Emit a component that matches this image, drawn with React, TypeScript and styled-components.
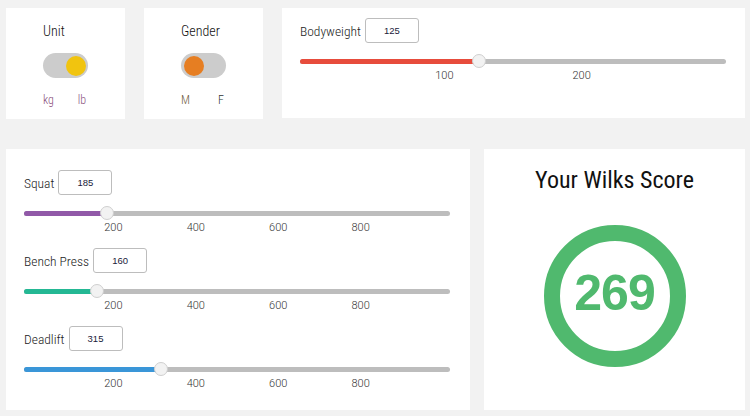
import { FC } from "react";
import styled, { createGlobalStyle } from "styled-components";

const GlobalStyle = createGlobalStyle`
  html, body {
    margin: 0;
    padding: 0;
    background: #f2f2f2;
    font-family: "Roboto Condensed", Roboto, "Liberation Sans", sans-serif;
    font-weight: 300;
    color: #222;
  }
`;

const Page = styled.div`
  width: 750px;
  height: 416px;
  box-sizing: border-box;
  padding: 8px 5px 0 6px;
  display: flex;
  flex-direction: column;
  gap: 30px;
`;

const Row = styled.div`
  display: flex;
`;

const Card = styled.div<{ w: number; h: number; gap?: number }>`
  background: #fff;
  width: ${(p) => p.w}px;
  height: ${(p) => p.h}px;
  margin-right: ${(p) => p.gap ?? 0}px;
  box-sizing: border-box;
  flex-shrink: 0;
`;

const ToggleCard = styled(Card)`
  display: flex;
  justify-content: center;
  padding-top: 15px;
`;

const ToggleColumn = styled.div`
  width: 45px;
  display: flex;
  flex-direction: column;
`;

const ToggleTitle = styled.div`
  font-size: 14px;
  line-height: 16px;
  color: #111;
  white-space: nowrap;
`;

const Track = styled.div`
  margin-top: 14px;
  width: 45px;
  height: 25px;
  border-radius: 13px;
  background: #cccccc;
  display: flex;
  align-items: center;
  padding: 0 2.5px;
  box-sizing: border-box;
`;

const Knob = styled.div<{ color: string; right?: boolean }>`
  width: 20px;
  height: 20px;
  border-radius: 50%;
  background: ${(p) => p.color};
  margin-left: ${(p) => (p.right ? "auto" : "0")};
`;

const OptionRow = styled.div`
  margin-top: 15px;
  display: flex;
  justify-content: space-between;
  padding-right: 2px;
  font-size: 12px;
  line-height: 14px;
`;

const Option = styled.span<{ color: string }>`
  color: ${(p) => p.color};
`;

const SliderCard = styled(Card)<{ pt: number; pr: number }>`
  padding: ${(p) => p.pt}px ${(p) => p.pr}px 0 18px;
  display: flex;
  flex-direction: column;
  gap: 16px;
`;

const LiftBlock = styled.div`
  display: flex;
  flex-direction: column;
`;

const FieldHeader = styled.div`
  display: flex;
  align-items: center;
  gap: 4px;
  height: 25px;
`;

const FieldLabel = styled.span`
  font-size: 13.5px;
  color: #222;
`;

const NumberBox = styled.div`
  width: 54px;
  height: 25px;
  box-sizing: border-box;
  border: 1px solid #bdbdbd;
  border-radius: 3px;
  display: flex;
  align-items: center;
  justify-content: center;
  font-family: "Liberation Sans", Arial, sans-serif;
  font-weight: 400;
  font-size: 9.5px;
  color: #1a1a3a;
`;

const SliderWrap = styled.div`
  position: relative;
  margin-top: 11px;
  height: 14px;
  display: flex;
  align-items: center;
`;

const Rail = styled.div`
  width: 100%;
  height: 5px;
  border-radius: 3px;
  background: #bdbdbd;
  overflow: hidden;
`;

const Fill = styled.div<{ color: string }>`
  height: 100%;
  background: ${(p) => p.color};
`;

const Thumb = styled.div`
  position: absolute;
  top: 0;
  width: 14px;
  height: 14px;
  margin-left: -7px;
  box-sizing: border-box;
  border-radius: 50%;
  background: #f2f2f2;
  border: 1px solid #cfcfcf;
`;

const Ticks = styled.div`
  position: relative;
  height: 12px;
`;

const Tick = styled.span`
  position: absolute;
  top: 2px;
  transform: translateX(-50%);
  font-family: Roboto, "Liberation Sans", sans-serif;
  font-weight: 300;
  font-size: 11px;
  line-height: 12px;
  color: #333;
`;

const ScoreCard = styled(Card)`
  display: flex;
  flex-direction: column;
  align-items: center;
  padding-top: 16px;
`;

const ScoreTitle = styled.div`
  font-size: 24px;
  font-weight: 400;
  line-height: 30px;
  color: #111;
`;

const Ring = styled.div`
  margin-top: 30px;
  width: 142px;
  height: 142px;
  box-sizing: border-box;
  border-radius: 50%;
  border: 16px solid #50b96e;
  display: flex;
  align-items: center;
  justify-content: center;
`;

const ScoreValue = styled.span`
  font-family: "Liberation Sans", Arial, sans-serif;
  font-weight: bold;
  font-size: 50px;
  letter-spacing: -1px;
  color: #50b96e;
  margin-top: -6px;
`;

interface SliderProps {
  value: number;
  max: number;
  color: string;
  ticks: number[];
}

// thumb travels between 7px and (width - 7px)
const at = (v: number, max: number) =>
  `calc(7px + (100% - 14px) * ${v / max})`;

const Slider: FC<SliderProps> = ({ value, max, color, ticks }) => (
  <>
    <SliderWrap>
      <Rail>
        <Fill color={color} style={{ width: at(value, max) }} />
      </Rail>
      <Thumb style={{ left: at(value, max) }} />
    </SliderWrap>
    <Ticks>
      {ticks.map((t) => (
        <Tick key={t} style={{ left: at(t, max) }}>
          {t}
        </Tick>
      ))}
    </Ticks>
  </>
);

interface FieldProps {
  label: string;
  value: number;
  max: number;
  color: string;
  ticks: number[];
}

const Field: FC<FieldProps> = ({ label, value, max, color, ticks }) => (
  <LiftBlock>
    <FieldHeader>
      <FieldLabel>{label}</FieldLabel>
      <NumberBox>{value}</NumberBox>
    </FieldHeader>
    <Slider value={value} max={max} color={color} ticks={ticks} />
  </LiftBlock>
);

const liftTicks = [200, 400, 600, 800];

const lifts = [
  { label: "Squat", value: 185, color: "#9159a8" },
  { label: "Bench Press", value: 160, color: "#24b894" },
  { label: "Deadlift", value: 315, color: "#3a96d8" },
];

const App: FC = () => (
  <>
    <GlobalStyle />
    <Page>
      <Row>
        <ToggleCard w={119} h={111} gap={19}>
          <ToggleColumn>
            <ToggleTitle>Unit</ToggleTitle>
            <Track>
              <Knob color="#f1c40f" right />
            </Track>
            <OptionRow>
              <Option color="#8a4f7d">kg</Option>
              <Option color="#8a4f7d">lb</Option>
            </OptionRow>
          </ToggleColumn>
        </ToggleCard>
        <ToggleCard w={119} h={111} gap={19}>
          <ToggleColumn>
            <ToggleTitle>Gender</ToggleTitle>
            <Track>
              <Knob color="#e67e22" />
            </Track>
            <OptionRow>
              <Option color="#6e5a3c">M</Option>
              <Option color="#333">F</Option>
            </OptionRow>
          </ToggleColumn>
        </ToggleCard>
        <SliderCard w={463} h={110} pt={10} pr={19}>
          <Field
            label="Bodyweight"
            value={125}
            max={300}
            color="#e74c3c"
            ticks={[100, 200]}
          />
        </SliderCard>
      </Row>
      <Row>
        <SliderCard w={464} h={261} gap={14} pt={21} pr={20}>
          {lifts.map((l) => (
            <Field
              key={l.label}
              label={l.label}
              value={l.value}
              max={1000}
              color={l.color}
              ticks={liftTicks}
            />
          ))}
        </SliderCard>
        <ScoreCard w={261} h={261}>
          <ScoreTitle>Your Wilks Score</ScoreTitle>
          <Ring>
            <ScoreValue>269</ScoreValue>
          </Ring>
        </ScoreCard>
      </Row>
    </Page>
  </>
);

export default App;
